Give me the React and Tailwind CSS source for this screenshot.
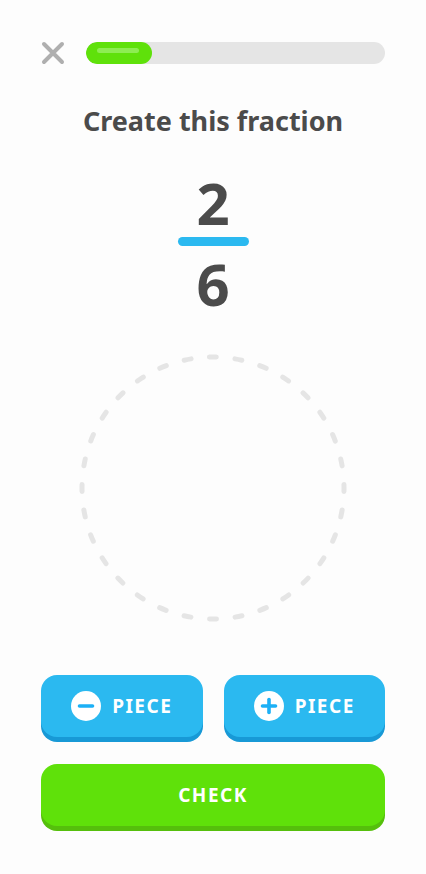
import { useState } from "react";

// ─── Bits ───────────────────────────────────────────────────────────────────

function CloseIcon() {
  return (
    <svg width="24" height="24" viewBox="0 0 24 24" className="shrink-0">
      <path d="M3 3 L21 21 M21 3 L3 21" stroke="#afafaf" strokeWidth="4" strokeLinecap="round" />
    </svg>
  );
}

function PieceIcon({ plus }) {
  return (
    <svg width="30" height="30" viewBox="0 0 30 30" className="shrink-0">
      <circle cx="15" cy="15" r="15" fill="#ffffff" />
      <path d="M8.5 15 H21.5" stroke="#1cb0f6" strokeWidth="3.6" strokeLinecap="round" />
      {plus && <path d="M15 8.5 V21.5" stroke="#1cb0f6" strokeWidth="3.6" strokeLinecap="round" />}
    </svg>
  );
}

function DashedCircle() {
  const r = 131;
  const period = (2 * Math.PI * r) / 32;
  return (
    <svg width="272" height="272" viewBox="0 0 272 272">
      <circle
        cx="136"
        cy="136"
        r={r}
        fill="none"
        stroke="#e5e5e5"
        strokeWidth="5"
        strokeLinecap="round"
        strokeDasharray={`7 ${period - 7}`}
        transform="rotate(-91.6 136 136)"
      />
    </svg>
  );
}

function PieceButton({ plus, onClick }) {
  return (
    <button
      onClick={onClick}
      className="flex-1 h-[62px] rounded-[16px] bg-[#2bb9f0] shadow-[0_5px_0_#1899d6] flex items-center justify-center gap-[11px] mb-[5px]"
    >
      <PieceIcon plus={plus} />
      <span className="text-white text-[19px] font-bold tracking-[1.5px]">PIECE</span>
    </button>
  );
}

// ─── Page ───────────────────────────────────────────────────────────────────

export default function App() {
  const [pieces, setPieces] = useState(0);

  return (
    <div
      className="w-[426px] h-[874px] bg-[#fdfdfd] flex flex-col overflow-hidden"
      style={{ fontFamily: "'Noto Sans', 'DejaVu Sans', sans-serif" }}
    >
      {/* Top bar */}
      <div className="flex items-center gap-[21px] pl-[41px] pr-[41px] pt-[41px]">
        <CloseIcon />
        <div className="flex-1 h-[22px] rounded-full bg-[#e5e5e5] overflow-hidden">
          <div className="w-[66px] h-full rounded-full bg-[#5fe10a] pt-[6px] pl-[11px]">
            <div className="w-[42px] h-[5px] rounded-full bg-[#8ded52]" />
          </div>
        </div>
      </div>

      {/* Prompt */}
      <h1 className="mt-[38px] text-center text-[27px] leading-[36px] font-bold text-[#4b4b4b]">
        Create this fraction
      </h1>

      {/* Fraction */}
      <div className="mt-[34px] flex flex-col items-center text-[#4b4b4b] font-bold text-[58px] leading-[60px]">
        <span>2</span>
        <div className="w-[71px] h-[9px] rounded-full bg-[#2bb9f0] mt-[4px] mb-[8px]" />
        <span>6</span>
      </div>

      {/* Pie area */}
      <div className="mt-[38px] flex justify-center">
        <DashedCircle />
      </div>

      <div className="flex-1" />

      {/* Controls */}
      <div className="px-[41px] pb-[43px] flex flex-col gap-[22px]">
        <div className="flex gap-[21px]">
          <PieceButton onClick={() => setPieces(Math.max(0, pieces - 1))} />
          <PieceButton plus onClick={() => setPieces(pieces + 1)} />
        </div>
        <button className="h-[62px] mb-[5px] rounded-[16px] bg-[#5fe10a] shadow-[0_5px_0_#55bf0c] text-white text-[19px] font-bold tracking-[1.5px]">
          CHECK
        </button>
      </div>
    </div>
  );
}
